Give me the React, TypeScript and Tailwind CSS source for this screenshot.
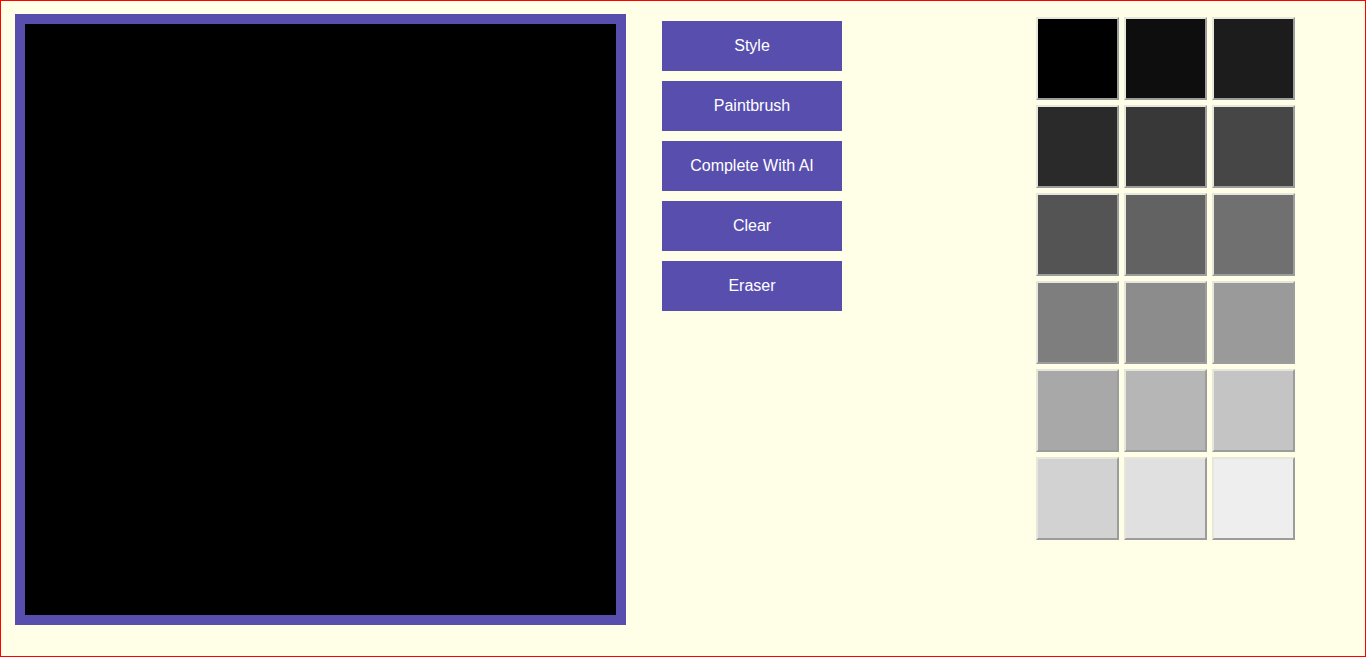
const tools = ['Style', 'Paintbrush', 'Complete With AI', 'Clear', 'Eraser'];

const swatches = [
  'bg-[#000000]', 'bg-[#0e0e0e]', 'bg-[#1c1c1c]',
  'bg-[#2a2a2a]', 'bg-[#383838]', 'bg-[#464646]',
  'bg-[#545454]', 'bg-[#626262]', 'bg-[#707070]',
  'bg-[#7e7e7e]', 'bg-[#8c8c8c]', 'bg-[#9a9a9a]',
  'bg-[#a8a8a8]', 'bg-[#b6b6b6]', 'bg-[#c4c4c4]',
  'bg-[#d2d2d2]', 'bg-[#e0e0e0]', 'bg-[#eeeeee]',
];

const App = () => {
  return (
    <div className="h-screen w-full border border-[#ff0000] bg-[#ffffe8] pl-[14px] pt-[13px] font-['Liberation_Sans',Arial,sans-serif] overflow-hidden">
      <div className="flex items-start">
        {/* Drawing canvas */}
        <div className="w-[611px] h-[611px] shrink-0 border-[10px] border-[#574eae] bg-black" />

        {/* Tool buttons */}
        <div className="ml-[36px] mt-[7px] flex flex-col gap-[10px]">
          {tools.map((label) => (
            <button
              key={label}
              className="w-[180px] h-[50px] bg-[#574eae] text-white text-[16px] leading-none"
            >
              {label}
            </button>
          ))}
        </div>

        {/* Colour palette */}
        <div className="ml-[194px] mt-[3px] grid grid-cols-[repeat(3,83px)] gap-[5px]">
          {swatches.map((bg, i) => (
            <div
              key={i}
              className={`h-[83px] w-[83px] border-2 border-t-[#e6e6da] border-l-[#e6e6da] border-b-[#9c9c9c] border-r-[#9c9c9c] ${bg}`}
            />
          ))}
        </div>
      </div>
    </div>
  );
};

export default App;
